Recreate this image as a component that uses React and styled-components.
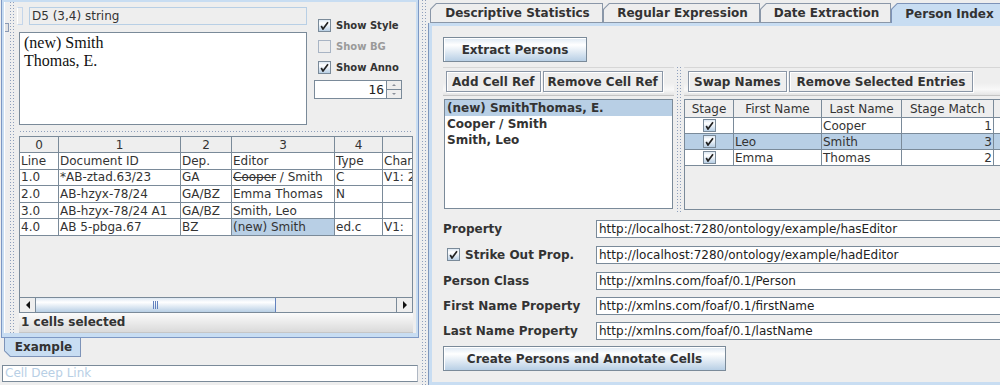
import React from "react";
import styled, { createGlobalStyle, css } from "styled-components";

const GlobalStyle = createGlobalStyle`
  * { box-sizing: border-box; }
  html, body { margin: 0; padding: 0; background: #eeeeee; }
  body {
    font-family: "DejaVu Sans", "Liberation Sans", sans-serif;
    font-size: 12px;
    color: #333333;
  }
`;

// metal "bumps" used on split pane dividers
const bumps = css`
  background-color: #eeeeee;
  background-image:
    linear-gradient(90deg, transparent 1px, #eeeeee 1px),
    linear-gradient(180deg, #8e9fbc 1px, transparent 1px);
  background-size: 3px 3px;
`;

const oceanGradient = "linear-gradient(180deg, #dde8f3 0%, #ffffff 30%, #b8cfe5 100%)";

const Page = styled.div`
  display: flex;
  width: 1000px;
  height: 385px;
  overflow: hidden;
  background: #eeeeee;
`;

/* ---------- left side ---------- */

const LeftCol = styled.div`
  width: 420px;
  flex: none;
  display: flex;
  flex-direction: column;
`;

const LeftFrame = styled.div`
  margin-left: 1px;
  width: 418px;
  height: 338px;
  flex: none;
  border: 1px solid #7d98c4;
  border-top: none;
  background: #c8ddf2;
  padding: 2px 2px 4px 2px;
  display: flex;
`;

const LeftInner = styled.div`
  flex: 1;
  min-width: 0;
  display: flex;
  background: #eeeeee;
`;

const SideStrip = styled.div`
  width: 13px;
  flex: none;
  display: flex;
`;

const Rail = styled.div`
  width: 5px;
  border-left: 1px solid #ffffff;
  padding-top: 21px;
`;

const Knob = styled.div`
  width: 4px;
  height: 9px;
  border: 1px solid #8a9ab5;
  border-left: none;
  background: #e2e2e2;
`;

const VBumps = styled.div`
  width: ${(p) => p.$w || 6}px;
  margin-left: ${(p) => (p.$ml != null ? p.$ml : 1)}px;
  ${bumps}
`;

const MainSplit = styled.div`
  flex: 1;
  min-width: 0;
  display: flex;
  flex-direction: column;
`;

const TopPane = styled.div`
  height: 125px;
  flex: none;
  display: flex;
`;

const LeftStack = styled.div`
  width: 290px;
  display: flex;
  flex-direction: column;
`;

const InfoRow = styled.div`
  margin-top: 5px;
  height: 18px;
  display: flex;
  gap: 6px;
`;

const Grip = styled.div`
  width: 6px;
  border: 1px solid #c5d6ea;
  border-left-color: #ffffff;
`;

const InfoLabel = styled.div`
  flex: 1;
  border: 1px solid #b8cfe5;
  padding-left: 2px;
  line-height: 16px;
  color: #333333;
`;

const TextArea = styled.div`
  margin: 7px 0 0 2px;
  height: 93px;
  background: #ffffff;
  border: 1px solid #7a8a99;
  padding: 1px 4px;
  font-family: "Liberation Serif", "Times New Roman", serif;
  font-size: 16px;
  line-height: 18px;
  color: #111111;
`;

const RightStack = styled.div`
  margin-left: 7px;
  width: 88px;
  padding-top: 13px;
  display: flex;
  flex-direction: column;
`;

const CheckRow = styled.label`
  height: 21px;
  display: flex;
  align-items: center;
  gap: ${(p) => (p.$gap != null ? p.$gap : 5)}px;
  padding-left: ${(p) => (p.$pl != null ? p.$pl : 4)}px;
  font-weight: bold;
  font-size: ${(p) => p.$fs || 10}px;
  color: ${(p) => (p.$disabled ? "#9a9a9a" : "#333333")};
`;

const Box = styled.span`
  width: 13px;
  height: 13px;
  flex: none;
  display: inline-flex;
  align-items: center;
  justify-content: center;
  border: 1px solid ${(p) => (p.$disabled ? "#a8b4c4" : "#7a8a99")};
  background: ${(p) => (p.$disabled ? "#eeeeee" : oceanGradient)};
`;

const Check = ({ on = true, disabled }) => (
  <Box $disabled={disabled}>
    {on && (
      <svg width="9" height="9" viewBox="0 0 9 9">
        <path d="M1.2 5 L3 8 L8 1.2" fill="none" stroke="#222" strokeWidth="1.7" />
      </svg>
    )}
  </Box>
);

const Spinner = styled.div`
  margin-top: 2px;
  height: 19px;
  display: flex;
`;

const SpinField = styled.div`
  flex: 1;
  background: #ffffff;
  border: 1px solid #7a8a99;
  border-right: none;
  text-align: right;
  padding-right: 2px;
  font-family: "DejaVu Sans Mono", monospace;
  font-size: 13px;
  line-height: 17px;
  color: #222222;
`;

const SpinButtons = styled.div`
  width: 16px;
  display: flex;
  flex-direction: column;
  border: 1px solid #7a8a99;
`;

const SpinBtn = styled.div`
  flex: 1;
  display: flex;
  align-items: center;
  justify-content: center;
  background: #eeeeee;
  & + & { border-top: 1px solid #7a8a99; }
  &::after {
    content: "";
    border-left: 2px solid transparent;
    border-right: 2px solid transparent;
    ${(p) =>
      p.$down
        ? "border-top: 2px solid #8a8f99;"
        : "border-bottom: 2px solid #8a8f99;"}
  }
`;

const HDivider = styled.div`
  height: 9px;
  flex: none;
  padding: 4px 3px 0 3px;
  &::before {
    content: "";
    display: block;
    height: 3px;
    ${bumps}
  }
`;

const TableScroll = styled.div`
  margin-left: 2px;
  width: 394px;
  height: 177px;
  flex: none;
  border: 1px solid #7a8a99;
  border-bottom: none;
  display: flex;
  flex-direction: column;
`;

const Viewport = styled.div`
  flex: 1;
  overflow: hidden;
  background: #eeeeee;
`;

const Grid = styled.div`
  display: grid;
  grid-template-columns: ${(p) => p.$cols};
  grid-template-rows: ${(p) => p.$head}px;
  grid-auto-rows: ${(p) => p.$row}px;
  width: max-content;
`;

const HeadCell = styled.div`
  background: #eeeeee;
  border-right: 1px solid #7a8a99;
  border-bottom: 1px solid #7a8a99;
  display: flex;
  align-items: center;
  justify-content: center;
  white-space: nowrap;
  overflow: hidden;
  color: #333333;
`;

const Cell = styled.div`
  background: ${(p) => (p.$sel ? "#b8cfe5" : "#ffffff")};
  border-right: 1px solid #7a8a99;
  border-bottom: 1px solid #7a8a99;
  display: flex;
  align-items: center;
  justify-content: ${(p) =>
    p.$align === "right" ? "flex-end" : p.$align === "center" ? "center" : "flex-start"};
  padding: 0 1px;
  white-space: nowrap;
  overflow: hidden;
  color: #333333;
`;

const Strike = styled.span`
  text-decoration: line-through;
`;

const HScroll = styled.div`
  height: 16px;
  flex: none;
  display: flex;
  border-top: 1px solid #7a8a99;
  border-bottom: 1px solid #7a8a99;
  background: #eeeeee;
`;

const ScrollBtn = styled.div`
  width: 16px;
  flex: none;
  display: flex;
  align-items: center;
  justify-content: center;
  background: #eeeeee;
  ${(p) => (p.$right ? "border-left: 1px solid #7a8a99;" : "border-right: 1px solid #7a8a99;")}
  &::after {
    content: "";
    border-top: 4px solid transparent;
    border-bottom: 4px solid transparent;
    ${(p) =>
      p.$right ? "border-left: 4px solid #111;" : "border-right: 4px solid #111;"}
  }
`;

const Thumb = styled.div`
  width: 240px;
  flex: none;
  border-right: 1px solid #6382bf;
  background: ${oceanGradient};
  display: flex;
  align-items: center;
  justify-content: center;
  gap: 1px;
`;

const GripLine = styled.span`
  width: 1px;
  height: 8px;
  background: #6382bf;
`;

const Track = styled.div`
  flex: 1;
  background: #eeeeee;
`;

const StatusBar = styled.div`
  margin-left: 2px;
  width: 394px;
  height: 20px;
  flex: none;
  background: linear-gradient(180deg, #fbfbfb, #dadada);
  border-bottom: 1px solid #c6c6c6;
  padding-left: 2px;
  font-weight: bold;
  font-size: 12px;
  line-height: 19px;
  color: #333333;
`;

const TabRow = styled.div`
  height: 19px;
  flex: none;
  display: flex;
  padding-left: 4px;
`;

const TabOuter = styled.div`
  width: ${(p) => p.$w}px;
  height: ${(p) => p.$h}px;
  flex: none;
  background: ${(p) => (p.$sel ? "#7d93b8" : "#8a97a8")};
  padding: ${(p) =>
    p.$bottom ? "0 1px 1px 1px" : p.$sel ? "1px 1px 0 1px" : "1px 1px 1px 1px"};
  clip-path: ${(p) =>
    p.$bottom
      ? "polygon(0 0, 100% 0, 100% 100%, 6px 100%, 0 calc(100% - 6px))"
      : "polygon(0 6px, 6px 0, 100% 0, 100% 100%, 0 100%)"};
`;

const TabInner = styled.div`
  height: 100%;
  background: ${(p) => (p.$sel ? "#c8ddf2" : "#eeeeee")};
  clip-path: ${(p) =>
    p.$bottom
      ? "polygon(0 0, 100% 0, 100% 100%, 5.5px 100%, 0 calc(100% - 5.5px))"
      : "polygon(0 5.5px, 5.5px 0, 100% 0, 100% 100%, 0 100%)"};
  display: flex;
  align-items: center;
  justify-content: center;
  padding-left: 2px;
  font-weight: bold;
  font-size: 12px;
  color: #333333;
  white-space: nowrap;
`;

const Tab = ({ w, h, sel, bottom, children }) => (
  <TabOuter $w={w} $h={h} $sel={sel} $bottom={bottom}>
    <TabInner $sel={sel} $bottom={bottom}>{children}</TabInner>
  </TabOuter>
);

const DeepLink = styled.div`
  margin: 8px 0 0 2px;
  width: 416px;
  height: 17px;
  flex: none;
  background: #ffffff;
  border: 1px solid #7a8a99;
  border-right-color: #b0b8c4;
  padding-left: 2px;
  line-height: 15px;
  color: #b8cfe5;
`;

const VDivider = styled.div`
  width: 8px;
  flex: none;
  padding-left: 2px;
  display: flex;
`;

/* ---------- right side ---------- */

const RightCol = styled.div`
  flex: 1;
  min-width: 0;
  overflow: hidden;
  display: flex;
  flex-direction: column;
`;

const TabStrip = styled.div`
  height: 23px;
  flex: none;
  display: flex;
  align-items: flex-end;
  padding-left: 2px;
`;

const RightFrame = styled.div`
  width: 620px;
  flex: 1;
  border-left: 1px solid #7f96ba;
  box-shadow: inset 3px 0 0 #c8ddf2, inset 0 3px 0 #c8ddf2, inset 0 -3px 0 #c8ddf2;
  padding: 14px 0 0 14px;
  display: flex;
  flex-direction: column;
`;

const Button = styled.div`
  width: ${(p) => p.$w}px;
  height: 25px;
  flex: none;
  margin-top: ${(p) => p.$mt || 0}px;
  border: 1px solid #7a8a99;
  box-shadow: inset 1px 1px 0 #ffffff;
  background: ${oceanGradient};
  display: flex;
  align-items: center;
  justify-content: center;
  font-weight: bold;
  font-size: 12px;
  color: #333333;
  white-space: nowrap;
`;

const SplitArea = styled.div`
  margin-top: 5px;
  height: 145px;
  flex: none;
  display: flex;
`;

const Pane = styled.div`
  width: ${(p) => (p.$w ? `${p.$w}px` : "auto")};
  flex: ${(p) => (p.$w ? "none" : "1")};
  min-width: 0;
  display: flex;
  flex-direction: column;
`;

const ToolBar = styled.div`
  height: 29px;
  flex: none;
  display: flex;
  gap: 2px;
  padding: 3px 0 0 ${(p) => p.$pl}px;
  border-top: 1px solid #d6d6d6;
  border-bottom: 1px solid #c4c4c4;
  background: linear-gradient(180deg, #eeeeee 55%, #f8f8f8 80%, #e4e4e4);
`;

const ToolButton = styled.div`
  height: 21px;
  padding: 0 ${(p) => p.$px || 5}px;
  border: 1px solid #8a96a6;
  box-shadow: inset 1px 1px 0 #ffffff, 1px 1px 0 #ffffff;
  background: #eeeeee;
  display: flex;
  align-items: center;
  font-weight: bold;
  font-size: 12px;
  color: #333333;
  white-space: nowrap;
`;

const ListBox = styled.div`
  margin: 3px 0 0 1px;
  width: 229px;
  height: 110px;
  background: #ffffff;
  border: 1px solid #7a8a99;
`;

const ListItem = styled.div`
  height: 16px;
  padding-left: 2px;
  line-height: 16px;
  font-weight: bold;
  font-size: 12px;
  background: ${(p) => (p.$sel ? "#b8cfe5" : "transparent")};
  color: #333333;
  white-space: nowrap;
`;

const SplitBumps = styled.div`
  width: 10px;
  flex: none;
  padding-left: 3px;
  display: flex;
`;

const TableBox = styled.div`
  margin-top: 3px;
  height: 111px;
  border: 1px solid #7a8a99;
  border-right: none;
  background: #eeeeee;
  overflow: hidden;
`;

const Form = styled.div`
  margin-top: 4px;
  display: flex;
  flex-direction: column;
`;

const FormRow = styled.div`
  height: ${(p) => p.$h}px;
  display: grid;
  grid-template-columns: 153px 1fr;
  align-items: center;
`;

const FormLabel = styled.div`
  font-weight: bold;
  font-size: 12px;
  color: #333333;
  white-space: nowrap;
`;

const Field = styled.div`
  height: 18px;
  background: #ffffff;
  border: 1px solid #7a8a99;
  padding-left: 2px;
  line-height: 16px;
  font-size: 12px;
  color: #222222;
  white-space: nowrap;
  overflow: hidden;
`;

/* ---------- data ---------- */

const leftCols = "39px 122px 51px 103px 48px 60px";
const leftRows = [
  ["Line", "Document ID", "Dep.", "Editor", "Type", "Char"],
  ["1.0", "*AB-ztad.63/23", "GA", "strike", "C", "V1: 2"],
  ["2.0", "AB-hzyx-78/24", "GA/BZ", "Emma Thomas", "N", ""],
  ["3.0", "AB-hzyx-78/24 A1", "GA/BZ", "Smith, Leo", "", ""],
  ["4.0", "AB 5-pbga.67", "BZ", "(new) Smith", "ed.c", "V1:"],
];

const rightCols = "49px 88px 80px 92px 66px";
const persons = [
  { first: "", last: "Cooper", match: "1" },
  { first: "Leo", last: "Smith", match: "3", sel: true },
  { first: "Emma", last: "Thomas", match: "2" },
];

const formRows = [
  { label: "Property", value: "http://localhost:7280/ontology/example/hasEditor", h: 25 },
  { label: "Strike Out Prop.", value: "http://localhost:7280/ontology/example/hadEditor", h: 27, check: true },
  { label: "Person Class", value: "http://xmlns.com/foaf/0.1/Person", h: 25 },
  { label: "First Name Property", value: "http://xmlns.com/foaf/0.1/firstName", h: 25 },
  { label: "Last Name Property", value: "http://xmlns.com/foaf/0.1/lastName", h: 25 },
];

export default function App() {
  return (
    <Page>
      <GlobalStyle />
      <LeftCol>
        <LeftFrame>
          <LeftInner>
            <SideStrip>
              <Rail>
                <Knob />
              </Rail>
              <VBumps />
            </SideStrip>
            <MainSplit>
              <TopPane>
                <LeftStack>
                  <InfoRow>
                    <Grip />
                    <InfoLabel>D5 (3,4) string</InfoLabel>
                  </InfoRow>
                  <TextArea>
                    (new) Smith
                    <br />
                    Thomas, E.
                  </TextArea>
                </LeftStack>
                <RightStack>
                  <CheckRow>
                    <Check />
                    Show Style
                  </CheckRow>
                  <CheckRow $disabled>
                    <Check on={false} disabled />
                    Show BG
                  </CheckRow>
                  <CheckRow>
                    <Check />
                    Show Anno
                  </CheckRow>
                  <Spinner>
                    <SpinField>16</SpinField>
                    <SpinButtons>
                      <SpinBtn />
                      <SpinBtn $down />
                    </SpinButtons>
                  </Spinner>
                </RightStack>
              </TopPane>
              <HDivider />
              <TableScroll>
                <Viewport>
                  <Grid $cols={leftCols} $head={16} $row={16.6}>
                    {["0", "1", "2", "3", "4", ""].map((h, i) => (
                      <HeadCell key={"h" + i}>{h}</HeadCell>
                    ))}
                    {leftRows.map((row, r) =>
                      row.map((v, c) => (
                        <Cell key={r + "-" + c} $sel={r === 4 && c === 3}>
                          {v === "strike" ? (
                            <>
                              <Strike>Cooper</Strike>&nbsp;/ Smith
                            </>
                          ) : (
                            v
                          )}
                        </Cell>
                      ))
                    )}
                  </Grid>
                </Viewport>
                <HScroll>
                  <ScrollBtn />
                  <Thumb>
                    <GripLine />
                    <GripLine />
                    <GripLine />
                  </Thumb>
                  <Track />
                  <ScrollBtn $right />
                </HScroll>
              </TableScroll>
              <StatusBar>1 cells selected</StatusBar>
            </MainSplit>
          </LeftInner>
        </LeftFrame>
        <TabRow>
          <Tab w={77} h={19} sel bottom>
            Example
          </Tab>
        </TabRow>
        <DeepLink>Cell Deep Link</DeepLink>
      </LeftCol>

      <VDivider>
        <VBumps $w={6} $ml={0} />
      </VDivider>

      <RightCol>
        <TabStrip>
          <Tab w={173} h={20}>Descriptive Statistics</Tab>
          <Tab w={157} h={20}>Regular Expression</Tab>
          <Tab w={131} h={20}>Date Extraction</Tab>
          <Tab w={115} h={20} sel>
            Person Index
          </Tab>
        </TabStrip>
        <RightFrame>
          <Button $w={144}>Extract Persons</Button>
          <SplitArea>
            <Pane $w={231}>
              <ToolBar $pl={3}>
                <ToolButton>Add Cell Ref</ToolButton>
                <ToolButton $px={4}>Remove Cell Ref</ToolButton>
              </ToolBar>
              <ListBox>
                <ListItem $sel>(new) SmithThomas, E.</ListItem>
                <ListItem>Cooper / Smith</ListItem>
                <ListItem>Smith, Leo</ListItem>
              </ListBox>
            </Pane>
            <SplitBumps>
              <VBumps $w={5} $ml={0} />
            </SplitBumps>
            <Pane>
              <ToolBar $pl={4}>
                <ToolButton>Swap Names</ToolButton>
                <ToolButton $px={7}>Remove Selected Entries</ToolButton>
              </ToolBar>
              <TableBox>
                <Grid $cols={rightCols} $head={18} $row={16}>
                  {["Stage", "First Name", "Last Name", "Stage Match", ""].map((h, i) => (
                    <HeadCell key={"rh" + i}>{h}</HeadCell>
                  ))}
                  {persons.map((p, r) => (
                    <React.Fragment key={"p" + r}>
                      <Cell $sel={p.sel} $align="center">
                        <Check />
                      </Cell>
                      <Cell $sel={p.sel}>{p.first}</Cell>
                      <Cell $sel={p.sel}>{p.last}</Cell>
                      <Cell $sel={p.sel} $align="right">
                        {p.match}
                      </Cell>
                      <Cell $sel={p.sel} />
                    </React.Fragment>
                  ))}
                </Grid>
              </TableBox>
            </Pane>
          </SplitArea>
          <Form>
            {formRows.map((f) => (
              <FormRow key={f.label} $h={f.h}>
                {f.check ? (
                  <CheckRow $fs={12} $gap={5} $pl={4}>
                    <Check />
                    {f.label}
                  </CheckRow>
                ) : (
                  <FormLabel>{f.label}</FormLabel>
                )}
                <Field>{f.value}</Field>
              </FormRow>
            ))}
          </Form>
          <Button $w={283} $mt={3}>
            Create Persons and Annotate Cells
          </Button>
        </RightFrame>
      </RightCol>
    </Page>
  );
}
